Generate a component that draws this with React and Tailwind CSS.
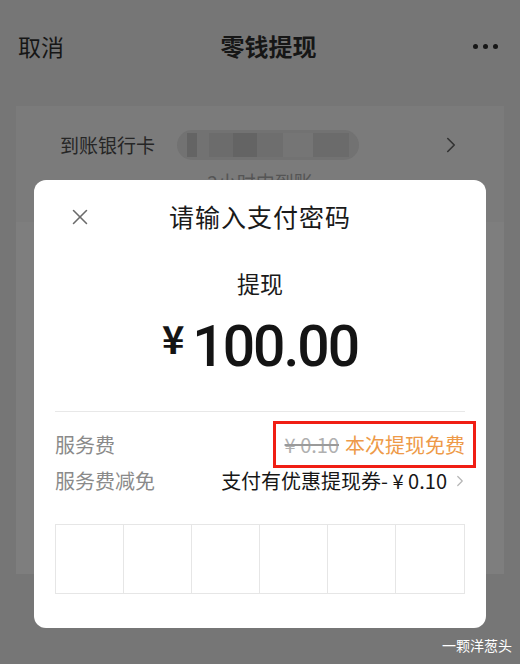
import { X, ChevronRight } from "lucide-react";

const font = { fontFamily: '"Noto Sans CJK SC", "Noto Sans", sans-serif' };

function Header() {
    return (
        <div className="flex items-center justify-between h-[92px] px-[18px] text-[#161616]">
            <span className="text-[23px]">取消</span>
            <span className="text-[24px] font-bold">零钱提现</span>
            <div className="flex gap-[5px] pr-[4px]">
                <span className="w-[5px] h-[5px] rounded-full bg-[#161616]"></span>
                <span className="w-[5px] h-[5px] rounded-full bg-[#161616]"></span>
                <span className="w-[5px] h-[5px] rounded-full bg-[#161616]"></span>
            </div>
        </div>
    );
}

function Backdrop() {
    return (
        <div className="mx-4 mt-[14px]">
            <div className="bg-[#7b7b7b] h-[116px] px-[44px] pt-[26px] relative">
                <div className="flex items-center h-[26px]">
                    <span className="text-[19px] text-[#262626]">到账银行卡</span>
                    <div className="ml-[22px] w-[182px] h-[30px] rounded-full bg-[#727272] flex items-center px-[10px] gap-0">
                        <span className="w-[10px] h-[24px] bg-[#646464]"></span>
                        <span className="w-[24px] h-[24px] bg-[#6c6c6c] ml-[12px]"></span>
                        <span className="w-[24px] h-[24px] bg-[#646464]"></span>
                        <span className="w-[26px] h-[24px] bg-[#6e6e6e]"></span>
                        <span className="w-[30px] h-[24px] bg-[#757575]"></span>
                        <span className="w-[36px] h-[24px] bg-[#6b6b6b]"></span>
                    </div>
                    <ChevronRight className="ml-auto mr-[-4px] text-[#333]" size={26} strokeWidth={1.5} />
                </div>
                <div className="text-center text-[19px] text-[#555] mt-[10px]">2小时内到账</div>
            </div>
            <div className="bg-[#7e7e7e] h-[352px]"></div>
        </div>
    );
}

function PasswordModal() {
    return (
        <div className="absolute left-[34px] top-[180px] w-[452px] h-[448px] bg-white rounded-[12px] px-[21px]">
            <div className="relative h-[74px] flex items-center justify-center">
                <X className="absolute left-[12px] top-[24px] text-[#6b6b6b]" size={26} strokeWidth={1.4} />
                <span className="text-[25px] text-[#1a1a1a] tracking-[1px]">请输入支付密码</span>
            </div>
            <div className="text-center text-[23px] text-[#1a1a1a] mt-[12px]">提现</div>
            <div className="flex items-start justify-center mt-[17px] text-[#141414] leading-none h-[57px]">
                <span className="text-[38px] font-bold mr-[8px] mt-[1px]">¥</span>
                <span className="text-[57px] font-medium tracking-[-2px]" style={{ fontFamily: '"Roboto", "Noto Sans", sans-serif' }}>100.00</span>
            </div>
            <div className="border-t border-[#e8e8e8] mt-[36px]"></div>
            <div className="flex items-center justify-between h-[34px] mt-[16px] text-[20px]">
                <span className="text-[#8a8a8a]">服务费</span>
                <div className="border-[3px] border-[#f01e14] h-[47px] w-[203px] mr-[-11px] flex items-center justify-end pr-[8px] gap-[6px]">
                    <span className="text-[#b0b0b0] line-through decoration-[#9a9a9a]">¥ 0.10</span>
                    <span className="text-[#ee9a48]">本次提现免费</span>
                </div>
            </div>
            <div className="flex items-center justify-between h-[34px] mt-[2px] text-[20px]">
                <span className="text-[#8a8a8a]">服务费减免</span>
                <div className="flex items-center text-[#161616]">
                    <span>支付有优惠提现券- ¥ 0.10</span>
                    <ChevronRight className="text-[#b5b5b5] ml-[4px] mr-[-4px]" size={18} strokeWidth={1.6} />
                </div>
            </div>
            <div className="grid grid-cols-6 border border-[#e6e6e6] h-[70px] mt-[26px]">
                {[0, 1, 2, 3, 4, 5].map(i => (
                    <div key={i} className={i < 5 ? "border-r border-[#e6e6e6]" : ""}></div>
                ))}
            </div>
        </div>
    );
}

export default function App() {
    return (
        <div className="relative w-[520px] h-[664px] bg-[#767676] overflow-hidden" style={font}>
            <Header />
            <Backdrop />
            <PasswordModal />
            <span className="absolute right-[8px] bottom-[8px] text-[14px] text-white">一颗洋葱头</span>
        </div>
    );
}
